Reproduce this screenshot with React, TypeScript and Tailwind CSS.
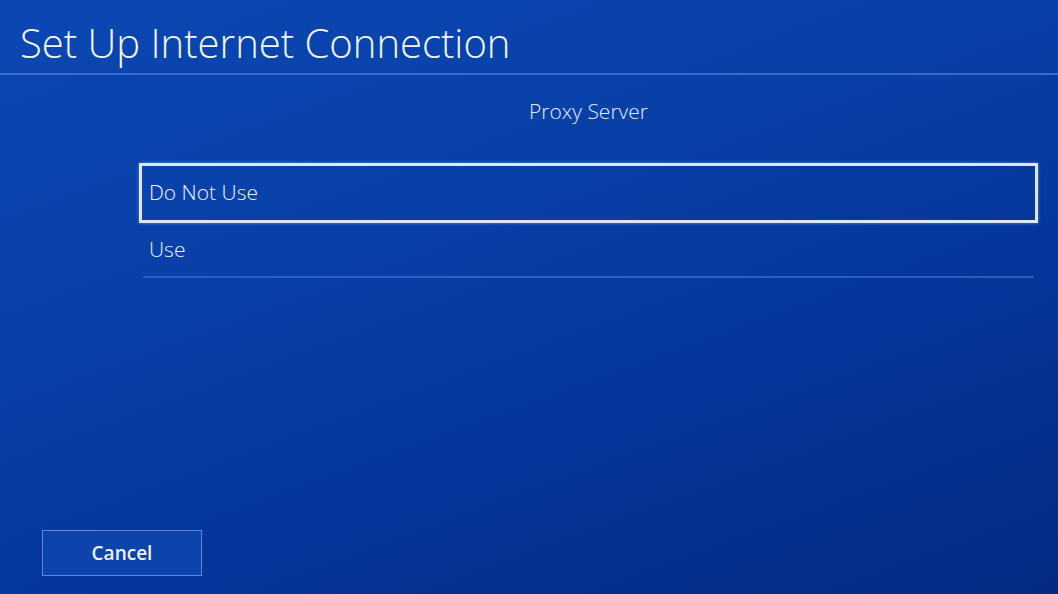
export default function App() {
  return (
    <div
      className="relative flex h-[594px] w-[1058px] flex-col overflow-hidden bg-[linear-gradient(160deg,#0b47b3_0%,#0840a8_35%,#06359a_65%,#042a84_100%)] text-white"
      style={{ fontFamily: '"Open Sans", "Noto Sans", sans-serif' }}
    >
      {/* Header */}
      <header className="h-[75px] border-b-2 border-[#3a6acb] pl-[20px] pt-[20px]">
        <h1 className="text-[40px] font-light leading-[46px] text-[#f2f6ff]">
          Set Up Internet Connection
        </h1>
      </header>

      {/* Options */}
      <div className="flex flex-1 flex-col pl-[139px] pr-[20px]">
        <p className="mt-[21px] text-center text-[21px] font-light leading-[30px] text-[#e4ecfb]">
          Proxy Server
        </p>
        <div className="mt-[37px] flex flex-col">
          <div className="flex h-[60px] items-center border-[3px] border-[#dbe6fa] pl-[7px] shadow-[0_0_3px_rgba(200,220,255,0.5)]">
            <span className="text-[21px] font-light text-[#eef3ff]">Do Not Use</span>
          </div>
          <div className="mx-[4px] flex h-[55px] items-center border-b-2 border-[#2f5dbd] pl-[6px]">
            <span className="text-[21px] font-light text-[#eef3ff]">Use</span>
          </div>
        </div>
      </div>

      {/* Footer */}
      <div className="pb-[18px] pl-[42px]">
        <button className="flex h-[46px] w-[160px] items-center justify-center border border-[#5d86d6] bg-[#0d44ac] text-[19px] font-semibold text-[#eef3ff]">
          Cancel
        </button>
      </div>
    </div>
  );
}
